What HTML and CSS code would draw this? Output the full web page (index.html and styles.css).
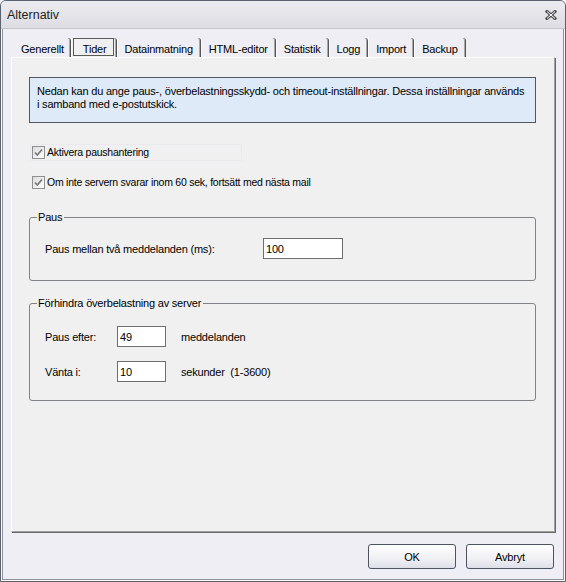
FILE: index.html
```html
<!DOCTYPE html>
<html>
<head>
<meta charset="utf-8">
<link rel="stylesheet" href="styles.css">
</head>
<body>
<div class="window">
  <div class="titlebar">
    <span class="title">Alternativ</span>
    <svg class="close" width="12" height="10" viewBox="0 0 12 10"><path d="M2 1.5 L10 8.5 M10 1.5 L2 8.5" stroke="#505050" stroke-width="3" stroke-linecap="square" fill="none"/><path d="M2 1.5 L10 8.5 M10 1.5 L2 8.5" stroke="#ffffff" stroke-width="1" fill="none"/></svg>
  </div>
  <div class="client">
    <div class="tabs">
      <div class="tab first">Generellt</div>
      <div class="tab active"><span class="focus">Tider</span></div>
      <div class="tab">Datainmatning</div>
      <div class="tab">HTML-editor</div>
      <div class="tab">Statistik</div>
      <div class="tab">Logg</div>
      <div class="tab">Import</div>
      <div class="tab">Backup</div>
    </div>
    <div class="panel">
      <div class="info">Nedan kan du ange paus-, överbelastningsskydd- och timeout-inställningar. Dessa inställningar används i samband med e-postutskick.</div>
      <label class="check row1"><span class="cb"><svg width="11" height="11" viewBox="0 0 11 11"><path d="M2 5.5 L4.3 8 L9 2.5" stroke="#7a7a7a" stroke-width="1.8" fill="none"/></svg></span><span class="check-text">Aktivera paushantering</span></label>
      <label class="check row2"><span class="cb"><svg width="11" height="11" viewBox="0 0 11 11"><path d="M2 5.5 L4.3 8 L9 2.5" stroke="#7a7a7a" stroke-width="1.8" fill="none"/></svg></span><span class="check-text">Om inte servern svarar inom 60 sek, fortsätt med nästa mail</span></label>
      <fieldset class="group pause">
        <legend>Paus</legend>
        <div class="pause-row">
          <span class="pause-label">Paus mellan två meddelanden (ms):</span>
          <span class="field wide">100</span>
        </div>
      </fieldset>
      <fieldset class="group overload">
        <legend>Förhindra överbelastning av server</legend>
        <div class="grid">
          <span>Paus efter:</span><span class="field">49</span><span class="unit">meddelanden</span>
          <span>Vänta i:</span><span class="field">10</span><span class="unit">sekunder&nbsp; (1-3600)</span>
        </div>
      </fieldset>
    </div>
    <div class="buttons">
      <button class="btn">OK</button>
      <button class="btn">Avbryt</button>
    </div>
  </div>
</div>
</body>
</html>
```
FILE: styles.css
```css
html, body {
  margin: 0;
  padding: 0;
}
body {
  width: 566px;
  height: 582px;
  background: #f4f4f8;
  font-family: "Liberation Sans", Arial, sans-serif;
  font-size: 11px;
  letter-spacing: -0.2px;
  color: #000;
  overflow: hidden;
}
.window {
  box-sizing: border-box;
  width: 566px;
  height: 582px;
  border: 1px solid #59626e;
  border-radius: 6px 6px 0 0;
  background: #eeeef4;
  box-shadow: inset 0 0 0 1px #fbfbfd, inset 0 0 0 2px #8c919a;
  display: flex;
  flex-direction: column;
}
.titlebar {
  box-sizing: border-box;
  height: 28px;
  display: flex;
  align-items: center;
  justify-content: space-between;
  padding: 0 8px 0 6px;
  background: linear-gradient(#ebebf0, #dddde3);
  border-bottom: 1px solid #c4c4cc;
  border-radius: 5px 5px 0 0;
  font-size: 12.5px;
  letter-spacing: 0;
  color: #222;
}
.title {
  padding-top: 1px;
}
.close {
  margin-top: 1px;
}
.client {
  flex: 1;
  display: flex;
  flex-direction: column;
  padding: 9px 10px 12px 10px;
}
.tabs {
  display: flex;
  height: 19px;
  padding-left: 2px;
}
.tab {
  box-sizing: border-box;
  height: 19px;
  padding: 5px 7px 0 7px;
  line-height: 13px;
  border-right: 1px solid #555;
  box-shadow: inset -1px 0 #a9a9a9;
  border-left: 1px solid #fbfbfb;
  border-top-right-radius: 3px;
  white-space: nowrap;
}
.tab.first {
  border-left: none;
  padding-left: 8px;
  padding-right: 6px;
}
.tab.active {
  padding: 0 2px 0 1px;
  background: #f0f0f0;
}
.focus {
  box-sizing: border-box;
  display: block;
  height: 18px;
  padding: 4px 6px 0 9px;
  border: 1px solid #5a5a5a;
}
.panel {
  flex: 1;
  background: #f0f0f0;
  border-top: 1px solid #fff;
  border-left: 1px solid #fff;
  border-right: 1px solid #a0a0a0;
  border-bottom: 1px solid #a0a0a0;
  box-shadow: 1px 1px 0 #696969;
  padding: 19px 18px 0 17px;
  display: flex;
  flex-direction: column;
}
.info {
  box-sizing: border-box;
  height: 46px;
  border: 1px solid #4e5762;
  background: #deeaf8;
  padding: 7px 6px 0 7px;
  line-height: 13px;
}
.check {
  display: flex;
  align-items: center;
  gap: 2px;
  margin-left: 3px;
  line-height: 13px;
  height: 13px;
}
.check-text {
  font-size: 10.5px;
  letter-spacing: -0.25px;
}
.row1 {
  margin-top: 23px;
  width: 208px;
  outline: 1px solid #e9e9ee;
  outline-offset: 1px;
}
.row2 {
  margin-top: 17px;
}
.cb {
  box-sizing: border-box;
  width: 13px;
  height: 13px;
  border: 1px solid #8e8f90;
  background: linear-gradient(135deg, #dcdcdc, #ffffff);
  display: flex;
}
.group {
  margin: 0;
  border: 1px solid #80848a;
  border-radius: 3px;
  padding: 0 0 0 15px;
  min-width: 0;
}
.group legend {
  padding: 0 2px 0 1px;
  margin-left: -8px;
  line-height: 13px;
}
.pause {
  margin-top: 22px;
  padding-top: 14px;
  padding-bottom: 21px;
}
.pause-row {
  display: flex;
  align-items: center;
}
.pause-label {
  width: 218px;
}
.field {
  box-sizing: border-box;
  display: flex;
  align-items: center;
  height: 21px;
  width: 49px;
  border: 1px solid #6e6e6e;
  background: #fff;
  padding: 0 2px;
}
.field.wide {
  width: 80px;
}
.overload {
  margin-top: 16px;
  padding-top: 16px;
  padding-bottom: 18px;
}
.grid {
  display: grid;
  grid-template-columns: 72px 49px auto;
  row-gap: 14px;
  align-items: center;
}
.unit {
  padding-left: 15px;
}
.buttons {
  display: flex;
  justify-content: flex-end;
  gap: 10px;
  margin-top: 12px;
  padding-right: 1px;
}
.btn {
  box-sizing: border-box;
  width: 88px;
  height: 25px;
  border: 1px solid #4c5461;
  border-radius: 3px;
  background: linear-gradient(#ffffff, #f0f0f4 60%, #dedee8);
  font-family: "Liberation Sans", Arial, sans-serif;
  font-size: 11px;
  letter-spacing: -0.2px;
  color: #000;
  padding: 0;
}
```
